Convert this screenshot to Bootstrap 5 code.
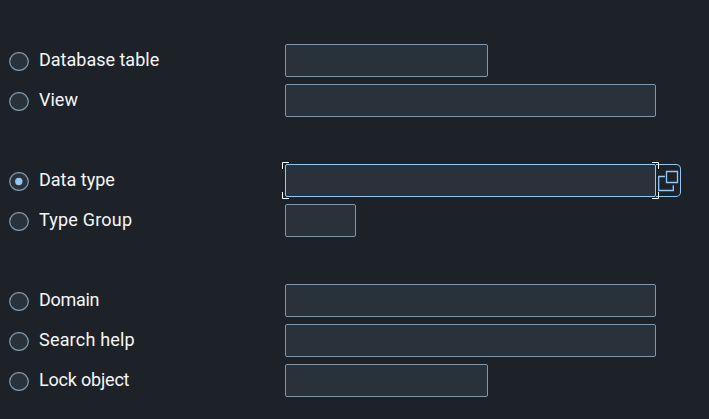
<!DOCTYPE html>
<html lang="en" data-bs-theme="dark">
<head>
<meta charset="utf-8">
<meta name="viewport" content="width=device-width, initial-scale=1">
<title>Dictionary objects</title>
<link href="https://cdn.jsdelivr.net/npm/bootstrap@5.3.0/dist/css/bootstrap.min.css" rel="stylesheet">
<style>
body{background:#1d2229;color:#f5f6f7;font-family:Roboto,"Liberation Sans",sans-serif;overflow:hidden}
.object-form{padding:44px 0 0 9px}
.object-row{height:33px;margin-bottom:7px}
.object-row.gap-above{margin-top:47px}
.object-row .form-check-input[type=radio]{width:20px;height:19px;margin:2px 0 0;background:url("data:image/svg+xml,%3Csvg xmlns='http://www.w3.org/2000/svg' viewBox='0 0 20 19'%3E%3Cellipse cx='10' cy='9.5' rx='9.3' ry='8.9' fill='%2329313a' stroke='%238396a8' stroke-width='1.25'/%3E%3C/svg%3E") center/100% 100% no-repeat;border:0;border-radius:0;box-shadow:none;flex:none}
.object-row .form-check-input[type=radio]:checked{background-image:url("data:image/svg+xml,%3Csvg xmlns='http://www.w3.org/2000/svg' viewBox='0 0 20 19'%3E%3Cellipse cx='10' cy='9.5' rx='9.3' ry='8.9' fill='%2329313a' stroke='%238396a8' stroke-width='1.25'/%3E%3Ccircle cx='9.8' cy='9.5' r='3.7' fill='%2391c8f6'/%3E%3C/svg%3E")}
.object-label{width:246px;margin-left:10px;font-size:18px;line-height:33px;height:33px;margin-top:-2px;white-space:nowrap}
.tight{letter-spacing:-.3px}
.snug{letter-spacing:-.2px}
.loose{letter-spacing:.2px}
.object-row .form-control{height:33px;min-height:0;background:#29313a;border:1px solid #8396a8;border-radius:2px;box-shadow:none;padding:0 8px;flex:none}
.w-medium{width:203px}
.w-wide{width:371px}
.w-short{width:71px}
.object-row .form-control.active-field{border-color:#91c8f6}
.help-button{width:25px;height:33px;padding:0;border:1px solid #91c8f6;border-left:0;border-radius:0 5px 5px 0;background:transparent}
.focus-corners{position:absolute;left:-3px;top:-2px;pointer-events:none}
</style>
</head>
<body>
<form class="object-form">
<div class="object-row d-flex align-items-center"><input class="form-check-input" type="radio" name="kind" id="k1"><label class="object-label" for="k1">Database table</label><input class="form-control w-medium" aria-label="Database table"></div>
<div class="object-row d-flex align-items-center"><input class="form-check-input" type="radio" name="kind" id="k2"><label class="object-label" for="k2">View</label><input class="form-control w-wide" aria-label="View"></div>
<div class="object-row gap-above d-flex align-items-center"><input class="form-check-input" type="radio" name="kind" id="k3" checked><label class="object-label" for="k3">Data type</label>
<div class="d-flex position-relative"><input class="form-control w-wide active-field" aria-label="Data type"><button class="help-button d-block" type="button" aria-label="Value help"><svg class="d-block" width="24" height="31" viewBox="656 165 24 31" fill="none" stroke="#91c8f6" stroke-width="1.3"><path d="M666.5 171.5h11v11h-11zM665 176.5h-6.3v14h14.6v-5.3"/></svg></button>
<svg class="focus-corners" width="377" height="37" viewBox="0 0 377 37" fill="none" stroke="#fff"><path d="M7 .5H.5V7M.5 30v6.500H7M370 .5h6.500V7M376.500 30v6.500H370"/></svg></div></div>
<div class="object-row d-flex align-items-center"><input class="form-check-input" type="radio" name="kind" id="k4"><label class="object-label loose" for="k4">Type Group</label><input class="form-control w-short" aria-label="Type Group"></div>
<div class="object-row gap-above d-flex align-items-center"><input class="form-check-input" type="radio" name="kind" id="k5"><label class="object-label tight" for="k5">Domain</label><input class="form-control w-wide" aria-label="Domain"></div>
<div class="object-row d-flex align-items-center"><input class="form-check-input" type="radio" name="kind" id="k6"><label class="object-label loose" for="k6">Search help</label><input class="form-control w-wide" aria-label="Search help"></div>
<div class="object-row d-flex align-items-center"><input class="form-check-input" type="radio" name="kind" id="k7"><label class="object-label snug" for="k7">Lock object</label><input class="form-control w-medium" aria-label="Lock object"></div>
</form>
<script src="https://cdn.jsdelivr.net/npm/bootstrap@5.3.0/dist/js/bootstrap.bundle.min.js"></script>
</body>
</html>
